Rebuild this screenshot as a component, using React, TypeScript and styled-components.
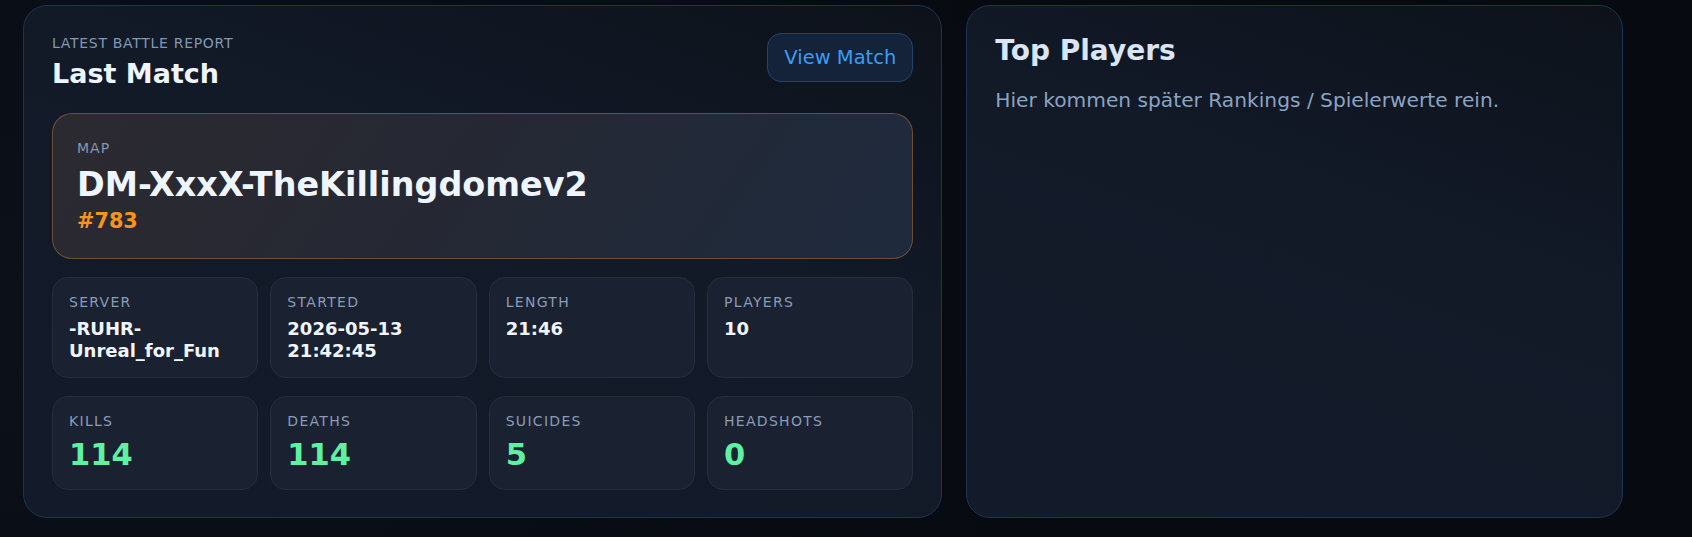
import styled, { createGlobalStyle } from "styled-components";

const GlobalStyle = createGlobalStyle`
  * {
    box-sizing: border-box;
  }

  body {
    margin: 0;
    background: radial-gradient(circle at 0% 60%, #0b1019 0%, #070a11 60%);
    min-height: 100vh;
    font-family: "DejaVu Sans", Verdana, sans-serif;
    color: #eef4ff;
  }
`;

const Page = styled.div`
  padding: 5px 23px;
`;

const Grid = styled.div`
  display: grid;
  grid-template-columns: 1.4fr 1fr;
  gap: 24px;
  max-width: 1600px;
`;

const Panel = styled.section`
  border: 1px solid #1d3452;
  border-radius: 24px;
  padding: 28px 28px 27px;
  background: linear-gradient(200deg, #0d121a 0%, #121927 38%, #131a29 100%);
`;

const Header = styled.div`
  display: flex;
  justify-content: space-between;
  align-items: flex-start;
  margin-bottom: 24px;
`;

const Eyebrow = styled.div`
  font-size: 14px;
  letter-spacing: 0.7px;
  text-transform: uppercase;
  color: #8198b4;
  padding-top: 1px;
`;

const Title = styled.h2`
  margin: 7px 0 0;
  font-size: 27px;
  font-weight: 700;
  color: #eef5ff;
`;

const Button = styled.button`
  font-family: inherit;
  font-size: 19.5px;
  color: #3c9cf2;
  background: #14233a;
  border: 1px solid #22436a;
  border-radius: 14px;
  padding: 12px 16px;
  margin-top: -1px;
  cursor: pointer;
`;

const MapBox = styled.div`
  border: 1px solid rgba(176, 118, 52, 0.5);
  border-radius: 20px;
  padding: 26px 24px 25px;
  margin-bottom: 18px;
  background: linear-gradient(125deg, #2c2a31 0%, #252833 45%, #1e2a3d 100%);
`;

const MapLabel = styled.div`
  font-size: 14px;
  letter-spacing: 1px;
  text-transform: uppercase;
  color: #8197b3;
  margin-bottom: 9px;
`;

const MapName = styled.div`
  font-size: 33.4px;
  font-weight: 700;
  color: #eef5ff;
  margin-bottom: 4px;
`;

const MatchId = styled.div`
  font-size: 20.8px;
  font-weight: 700;
  color: #f7941f;
  padding-top: 1px;
`;

const StatGrid = styled.div`
  display: grid;
  grid-template-columns: repeat(4, 1fr);
  gap: 12px;

  & + & {
    margin-top: 18px;
  }
`;

const Tile = styled.div`
  border: 1px solid #252e3d;
  border-radius: 16px;
  padding: 16px;
  background: #1a2130;
`;

const TileLabel = styled.div`
  font-size: 14px;
  letter-spacing: 1.3px;
  text-transform: uppercase;
  color: #8a9cb6;
  margin-bottom: 8px;
`;

const TileValue = styled.div<{ $big?: boolean }>`
  font-size: ${(p) => (p.$big ? "30.5px" : "18px")};
  line-height: ${(p) => (p.$big ? 1.17 : 1.2)};
  font-weight: 700;
  color: ${(p) => (p.$big ? "#5ff0a2" : "#f1f5fb")};
`;

const SideTitle = styled.h2`
  margin: 0 0 20px;
  font-size: 28px;
  font-weight: 700;
  color: #dbe5f3;
`;

const SideText = styled.p`
  margin: 0;
  font-size: 20.2px;
  line-height: 1.35;
  color: #8ca3c1;
`;

const infoStats = [
  { label: "Server", value: "-RUHR-Unreal_for_Fun" },
  { label: "Started", value: "2026-05-13 21:42:45" },
  { label: "Length", value: "21:46" },
  { label: "Players", value: "10" },
];

const battleStats = [
  { label: "Kills", value: "114" },
  { label: "Deaths", value: "114" },
  { label: "Suicides", value: "5" },
  { label: "Headshots", value: "0" },
];

const App = () => {
  return (
    <>
      <GlobalStyle />
      <Page>
        <Grid>
          <Panel>
            <Header>
              <div>
                <Eyebrow>Latest Battle Report</Eyebrow>
                <Title>Last Match</Title>
              </div>
              <Button>View Match</Button>
            </Header>

            <MapBox>
              <MapLabel>Map</MapLabel>
              <MapName>DM-XxxX-TheKillingdomev2</MapName>
              <MatchId>#783</MatchId>
            </MapBox>

            <StatGrid>
              {infoStats.map((s) => (
                <Tile key={s.label}>
                  <TileLabel>{s.label}</TileLabel>
                  <TileValue>{s.value}</TileValue>
                </Tile>
              ))}
            </StatGrid>

            <StatGrid>
              {battleStats.map((s) => (
                <Tile key={s.label}>
                  <TileLabel>{s.label}</TileLabel>
                  <TileValue $big>{s.value}</TileValue>
                </Tile>
              ))}
            </StatGrid>
          </Panel>

          <Panel>
            <SideTitle>Top Players</SideTitle>
            <SideText>Hier kommen später Rankings / Spielerwerte rein.</SideText>
          </Panel>
        </Grid>
      </Page>
    </>
  );
};

export default App;
